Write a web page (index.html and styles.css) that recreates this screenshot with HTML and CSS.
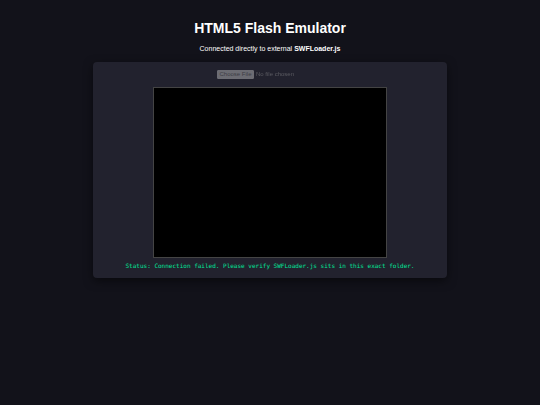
FILE: index.html
```
<!DOCTYPE html>
<html lang="en">
<head>
    <meta charset="UTF-8">
    <meta name="viewport" content="width=device-width, initial-scale=1.0">
    <title>HTML5 Flash Emulator</title>
    <link rel="stylesheet" href="styles.css">
</head>
<body>
    <h1>HTML5 Flash Emulator</h1>
    <p class="subtitle">Connected directly to external <strong>SWFLoader.js</strong></p>

    <div class="container">
        <input type="file" id="swfFile" class="file-input" accept=".swf" aria-label="Choose a SWF file" disabled>
        <canvas id="player" class="player" width="232" height="169"></canvas>
        <div id="status" class="status">Status: Connection failed. Please verify SWFLoader.js sits in this exact folder.</div>
    </div>
</body>
</html>
```

FILE: styles.css
```
body {
    background-color: #12121a;
    color: #ffffff;
    font-family: "Liberation Sans", Arial, sans-serif;
    text-align: center;
    margin: 0;
    padding: 20px;
}
h1 {
    font-size: 14px;
    line-height: 16px;
    margin: 0 0 8px;
}
.subtitle {
    font-size: 7px;
    line-height: 10px;
    margin: 0 0 8px;
}
.container {
    background-color: #22222e;
    max-width: 338px;
    margin: 0 auto;
    padding: 8px;
    border-radius: 4px;
    box-shadow: 0 3px 10px rgba(0, 0, 0, 0.5);
}
.file-input {
    display: block;
    width: 106px;
    height: 9px;
    margin: 0 auto 8px;
    color: #aaaaaa;
    font-family: inherit;
    font-size: 6px;
    line-height: 9px;
    opacity: 0.4;
}
.file-input::file-selector-button {
    box-sizing: border-box;
    width: 37px;
    height: 9px;
    margin: 0 2px 0 0;
    padding: 0;
    border: 1px solid #dddddd;
    border-radius: 1px;
    background-color: #dddddd;
    color: #666666;
    font-family: inherit;
    font-size: 6px;
    line-height: 7px;
}
.player {
    display: block;
    max-width: 100%;
    margin: 0 auto;
    background-color: #000000;
    border: 1px solid #444444;
}
.status {
    margin-top: 3px;
    color: #00e699;
    font-family: "DejaVu Sans Mono", monospace;
    font-size: 6px;
    line-height: 9px;
}
```
